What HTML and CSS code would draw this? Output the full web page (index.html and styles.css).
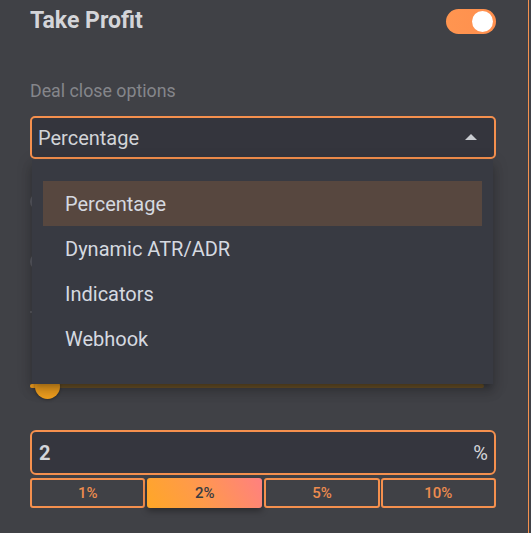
FILE: index.html
```html
<!DOCTYPE html>
<html>
<head>
<meta charset="utf-8">
<link rel="stylesheet" href="styles.css">
</head>
<body>
<div class="panel">
  <div class="header">
    <div class="title">Take Profit</div>
    <div class="toggle"><div class="knob"></div></div>
  </div>
  <div class="label">Deal close options</div>
  <div class="select-wrap">
    <div class="select">
      <span>Percentage</span>
      <span class="caret"></span>
    </div>
    <div class="menu">
      <div class="item active">Percentage</div>
      <div class="item">Dynamic ATR/ADR</div>
      <div class="item">Indicators</div>
      <div class="item">Webhook</div>
    </div>
  </div>
  <div class="radios">
    <span class="radio"></span>
    <span class="radio"></span>
    <span class="dot"></span>
  </div>
  <div class="slider">
    <div class="track"><div class="fill"></div></div>
    <div class="thumb"></div>
  </div>
  <div class="input">
    <span class="value">2</span>
    <span class="unit">%</span>
  </div>
  <div class="presets">
    <div class="preset">1%</div>
    <div class="preset selected">2%</div>
    <div class="preset">5%</div>
    <div class="preset">10%</div>
  </div>
</div>
</body>
</html>
```

FILE: styles.css
```css
* { box-sizing: border-box; }
html, body {
  margin: 0;
  padding: 0;
  background: #404146;
  font-family: Roboto, "Noto Sans", "Liberation Sans", sans-serif;
}
.panel {
  width: 529px;
  height: 533px;
  border-right: 1px solid #f5904e;
  padding: 0 32px 0 30px;
  overflow: hidden;
}
.header {
  height: 41px;
  display: flex;
  align-items: center;
  justify-content: space-between;
}
.title {
  font-size: 23px;
  font-weight: 700;
  color: #d4d5d9;
  line-height: 26px;
}
.toggle {
  width: 50px;
  height: 25px;
  border-radius: 13px;
  background: linear-gradient(90deg, #ff9550, #ff8f4e);
  position: relative;
  margin-top: 1px;
}
.knob {
  position: absolute;
  right: 3px;
  top: 2px;
  width: 21px;
  height: 21px;
  border-radius: 50%;
  background: #ffffff;
}
.label {
  margin-top: 39px;
  font-size: 17.8px;
  line-height: 21px;
  color: #85868b;
}
.select-wrap {
  position: relative;
  margin-top: 15px;
}
.select {
  height: 43px;
  border: 2px solid #f5904e;
  border-radius: 5px;
  background: #34353d;
  display: flex;
  align-items: center;
  justify-content: space-between;
  padding: 0 17px 0 6px;
  font-size: 20px;
  color: #d2d4d8;
}
.caret {
  width: 0;
  height: 0;
  border-left: 6px solid transparent;
  border-right: 6px solid transparent;
  border-bottom: 6px solid #c9ccd1;
  margin-top: -2px;
}
.menu {
  position: absolute;
  top: 44px;
  left: 2px;
  right: 3px;
  height: 224px;
  background: #383a42;
  padding: 21px 11px 0 11px;
  z-index: 5;
  box-shadow: 0 5px 5px -3px rgba(0,0,0,.2), 0 8px 10px 1px rgba(0,0,0,.14), 0 3px 14px 2px rgba(0,0,0,.12);
}
.item {
  height: 45px;
  display: flex;
  align-items: center;
  padding-left: 22px;
  font-size: 20px;
  color: #d5d9e0;
}
.item.active {
  background: #57473f;
}
.radios {
  margin-top: 34px;
  height: 77px;
  display: flex;
  flex-direction: column;
  gap: 43px;
  position: relative;
}
.radio {
  display: block;
  width: 17px;
  height: 17px;
  border-radius: 50%;
  border: 2px solid #5a5b62;
}
.dot {
  position: absolute;
  left: 0;
  top: 118px;
  width: 2px;
  height: 2px;
  background: #55565c;
}
.slider {
  position: relative;
  margin-top: 114px;
  height: 8px;
  margin-right: 12px;
}
.track {
  height: 4px;
  background: #6b5329;
  border-radius: 2px;
  position: relative;
}
.fill {
  position: absolute;
  left: 0;
  top: 0;
  height: 4px;
  width: 14px;
  background: #f2a022;
  border-radius: 2px;
}
.thumb {
  position: absolute;
  left: 5px;
  top: -10px;
  width: 25px;
  height: 25px;
  border-radius: 50%;
  background: #f3a11f;
  box-shadow: 0 1px 3px rgba(0,0,0,.3);
}
.input {
  margin-top: 38px;
  height: 45px;
  border: 2px solid #f5904e;
  border-radius: 6px;
  background: #35363e;
  display: flex;
  align-items: center;
  justify-content: space-between;
  padding: 0 6px 0 7px;
  font-size: 20px;
  color: #d3d5da;
}
.value {
  font-weight: 700;
}
.unit {
  margin-top: 1px;
}
.presets {
  margin-top: 3px;
  display: flex;
  gap: 1px;
}
.preset {
  flex: 1;
  height: 30px;
  border: 2px solid #f5904e;
  border-radius: 3px;
  display: flex;
  align-items: center;
  justify-content: center;
  font-size: 15px;
  font-weight: 500;
  color: #ee8c4f;
}
.preset.selected {
  border: none;
  background: linear-gradient(60deg, #ffa726, #ff9a4a 45%, #ff8080);
  color: #3a3b41;
  box-shadow: 0 3px 6px rgba(0,0,0,.35);
  flex: 0 0 115px;
  margin: 0 1px;
}
```
